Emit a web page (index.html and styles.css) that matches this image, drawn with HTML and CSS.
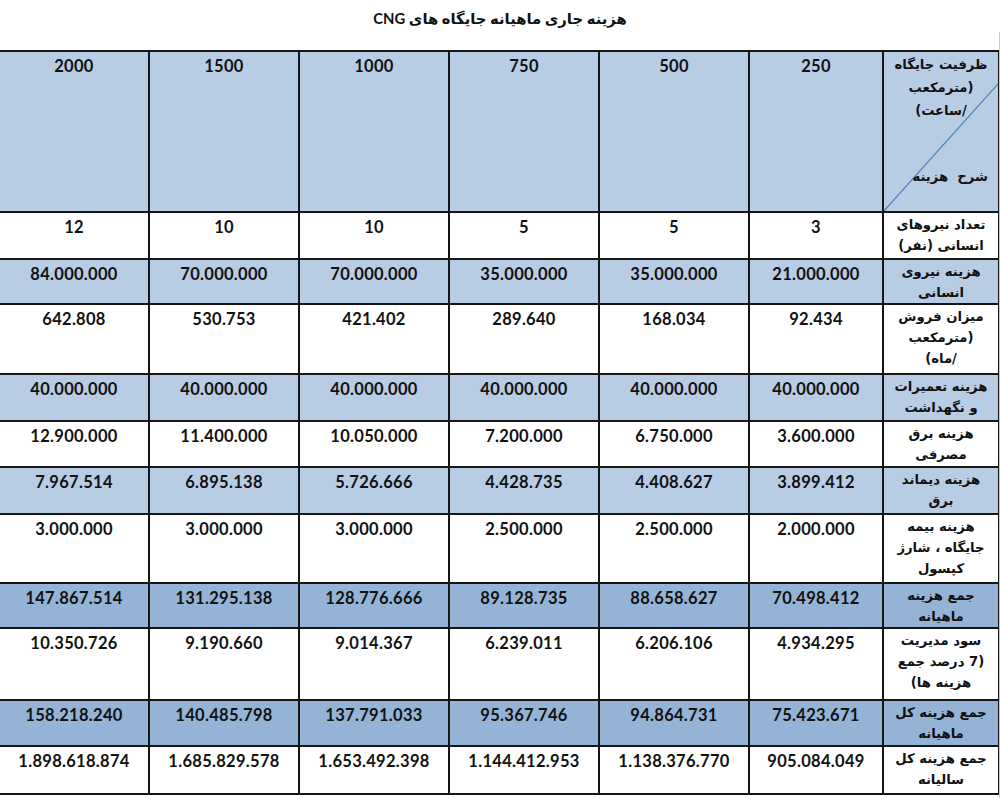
FILE: index.html
```html
<!DOCTYPE html>
<html lang="fa">
<head>
<meta charset="utf-8">
<title>هزینه جاری ماهیانه جایگاه های CNG</title>
<link rel="stylesheet" href="styles.css">
</head>
<body>
<div class="title" dir="rtl">هزینه جاری ماهیانه جایگاه های CNG</div>
<div class="sheet">
<table class="grid" dir="rtl">
<colgroup>
<col class="c-label"><col class="c-small"><col class="c-num"><col class="c-num"><col class="c-num"><col class="c-num"><col class="c-num">
</colgroup>
<tr class="head">
<td class="label corner">
<svg class="diag" viewBox="0 0 100 100" preserveAspectRatio="none"><line x1="0" y1="100" x2="100" y2="20" stroke="#4f81bd" stroke-width="1.2" vector-effect="non-scaling-stroke"/></svg>
<div class="corner-in">
<div class="cap-top">ظرفیت جایگاه<br>(مترمکعب<br>/ساعت)</div>
<div class="cap-bottom">شرح&nbsp; هزینه</div>
</div>
</td>
<td>250</td><td>500</td><td>750</td><td>1000</td><td>1500</td><td>2000</td>
</tr>
<tr class="h47">
<td class="label">تعداد نیروهای<br>انسانی (نفر)</td>
<td>3</td><td>5</td><td>5</td><td>10</td><td>10</td><td>12</td>
</tr>
<tr class="h45 light">
<td class="label">هزینه نیروی<br>انسانی</td>
<td>21.000.000</td><td>35.000.000</td><td>35.000.000</td><td>70.000.000</td><td>70.000.000</td><td>84.000.000</td>
</tr>
<tr class="h70">
<td class="label">میزان فروش<br>(مترمکعب<br>/ماه)</td>
<td>92.434</td><td>168.034</td><td>289.640</td><td>421.402</td><td>530.753</td><td>642.808</td>
</tr>
<tr class="h47 light">
<td class="label">هزینه تعمیرات<br>و نگهداشت</td>
<td>40.000.000</td><td>40.000.000</td><td>40.000.000</td><td>40.000.000</td><td>40.000.000</td><td>40.000.000</td>
</tr>
<tr class="h46">
<td class="label">هزینه برق<br>مصرفی</td>
<td>3.600.000</td><td>6.750.000</td><td>7.200.000</td><td>10.050.000</td><td>11.400.000</td><td>12.900.000</td>
</tr>
<tr class="h47 light">
<td class="label">هزینه دیماند<br>برق</td>
<td>3.899.412</td><td>4.408.627</td><td>4.428.735</td><td>5.726.666</td><td>6.895.138</td><td>7.967.514</td>
</tr>
<tr class="h69">
<td class="label">هزینه بیمه<br>جایگاه ، شارژ<br>کپسول</td>
<td>2.000.000</td><td>2.500.000</td><td>2.500.000</td><td>3.000.000</td><td>3.000.000</td><td>3.000.000</td>
</tr>
<tr class="h45 dark">
<td class="label">جمع هزینه<br>ماهیانه</td>
<td>70.498.412</td><td>88.658.627</td><td>89.128.735</td><td>128.776.666</td><td>131.295.138</td><td>147.867.514</td>
</tr>
<tr class="h72">
<td class="label">سود مدیریت<br>(7 درصد جمع<br>هزینه ها)</td>
<td>4.934.295</td><td>6.206.106</td><td>6.239.011</td><td>9.014.367</td><td>9.190.660</td><td>10.350.726</td>
</tr>
<tr class="h46 dark">
<td class="label">جمع هزینه کل<br>ماهیانه</td>
<td>75.423.671</td><td>94.864.731</td><td>95.367.746</td><td>137.791.033</td><td>140.485.798</td><td>158.218.240</td>
</tr>
<tr class="h48">
<td class="label">جمع هزینه کل<br>سالیانه</td>
<td>905.084.049</td><td>1.138.376.770</td><td>1.144.412.953</td><td>1.653.492.398</td><td>1.685.829.578</td><td>1.898.618.874</td>
</tr>
</table>
</div>
</body>
</html>
```
FILE: styles.css
```css
html, body {
  margin: 0;
  padding: 0;
  background: #ffffff;
}
body {
  width: 1000px;
  height: 798px;
  overflow: hidden;
  font-family: Lato, "DejaVu Sans", sans-serif;
  color: #111111;
}
.title {
  height: 32px;
  box-sizing: border-box;
  padding-top: 8px;
  text-align: center;
  font-family: Lato, "DejaVu Sans", sans-serif;
  font-weight: 700;
  font-size: 14.8px;
  line-height: 20px;
}
.sheet {
  box-sizing: border-box;
  width: 1000px;
  height: 766px;
  padding-top: 18px;
  border-right: 1px solid #c9c9c9;
  overflow: hidden;
}
.grid {
  border-collapse: collapse;
  table-layout: fixed;
  width: 1001px;
  margin-right: 1px;
  margin-left: -2px;
}
.c-label { width: 116px; }
.c-small { width: 134px; }
.c-num { width: 150px; }
.grid td {
  border: 2px solid #161616;
  padding: 3px 2px 0;
  vertical-align: top;
  text-align: center;
  font-size: 16.5px;
  font-weight: 700;
  line-height: 22px;
  letter-spacing: 0.3px;
  overflow: hidden;
}
.grid td.label {
  font-family: "DejaVu Sans", sans-serif;
  font-size: 13.2px;
  line-height: 21px;
  letter-spacing: 0;
  padding-top: 1px;
}
.head td {
  height: 156px;
  background: #b8cce4;
}
.h45 td { height: 40px; }
.h46 td { height: 41px; }
.h47 td { height: 42px; }
.h48 td { height: 43px; }
.h69 td { height: 64px; }
.h70 td { height: 65px; }
.h72 td { height: 67px; }
.light td { background: #b8cce4; }
.dark td { background: #95b3d7; }
.corner {
  position: relative;
}
.diag {
  position: absolute;
  left: 0;
  top: 0;
  width: 100%;
  height: 100%;
}
.corner-in {
  position: relative;
  height: 156px;
  display: flex;
  flex-direction: column;
  justify-content: space-between;
}
.cap-top {
  line-height: 23px;
}
.cap-bottom {
  text-align: right;
  padding-right: 8px;
  padding-bottom: 22px;
}
```
